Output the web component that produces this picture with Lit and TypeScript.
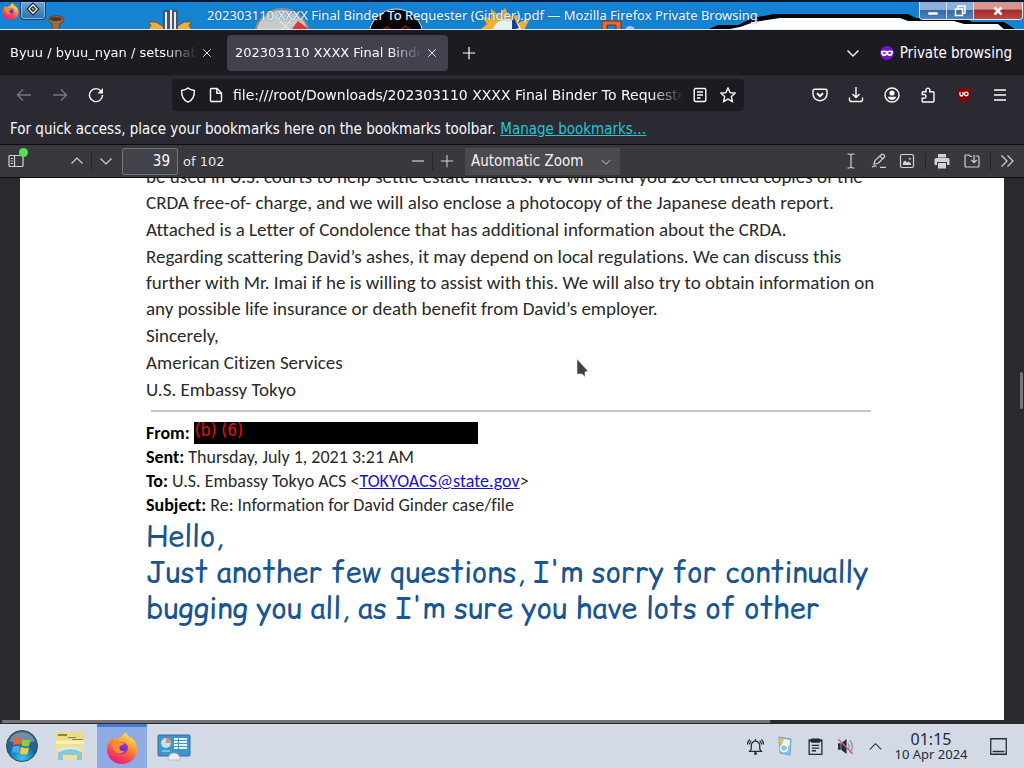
import { LitElement, html, css, svg, nothing } from "lit";
import { customElement } from "lit/decorators.js";

const icon = (body: unknown, size = 16, cls = "") =>
  html`<svg class="ico ${cls}" width=${size} height=${size} viewBox="0 0 16 16" aria-hidden="true">${body}</svg>`;

const I = {
  close: svg`<path d="M2 2l12 12m0-12L2 14" />`,
  plus: svg`<path d="M8 1v14M1 8h14" />`,
  minus: svg`<path d="M2 8h12" />`,
  down: svg`<path d="M2.500 5.500L8 11l5.500-5.500" />`,
  up: svg`<path d="M2.500 10.500L8 5l5.500 5.500" />`,
  back: svg`<path d="M15 8H1.500M7 2.500L1.500 8 7 13.500" />`,
  forward: svg`<path d="M1 8h13.500M9 2.500L14.500 8 9 13.500" />`,
  reload: svg`<path d="M13.200 4.200A6.500 6.500 0 1 0 14.500 8" /><path class="fill" d="M15 1v5.500H9.500z" />`,
  shield: svg`<path d="M8 1c2 1.600 4 2.200 6.400 2.500C14.600 9 12 13.500 8 15.200 4 13.500 1.400 9 1.600 3.500 4 3.200 6 2.600 8 1z" />`,
  page: svg`<path d="M3.500 1.500h5.500L13.500 6v7.500a1 1 0 0 1-1 1h-9a1 1 0 0 1-1-1v-11a1 1 0 0 1 1-1z" /><path d="M8.800 1.500V6.200h4.700" />`,
  reader: svg`<rect x="2.200" y="1.500" width="11.600" height="13" rx="1.500" /><path d="M5 5h6M5 8h6M5 11h3.500" />`,
  star: svg`<path d="M8 1l2.100 4.600 5 .6-3.700 3.400 1 5L8 12.100l-4.400 2.500 1-5L.900 6.200l5-.6z" />`,
  pocket: svg`<path d="M2.500 2.300h11a1.500 1.500 0 0 1 1.500 1.500V7A7 6.700 0 0 1 1 7V3.800a1.500 1.500 0 0 1 1.500-1.500z" /><path class="bold" d="M5 6.300L8 9.200l3-2.900" />`,
  download: svg`<path d="M8 0v10M4.500 7L8 10.500 11.500 7M1.500 10.500V13a1.500 1.500 0 0 0 1.500 1.500h10a1.500 1.500 0 0 0 1.500-1.500v-2.500" />`,
  account: svg`<circle cx="8" cy="8" r="7" /><circle class="fill" cx="8" cy="6" r="2.600" /><path class="fill" d="M3.800 9.800h8.400c-.6 2.300-2.500 3.200-4.200 3.200s-3.600-.9-4.200-3.200z" />`,
  puzzle: svg`<path d="M3.200 4.700H6V3a1.900 1.900 0 0 1 3.800 0v1.700H13a1 1 0 0 1 1 1V14a1 1 0 0 1-1 1H3.200a1 1 0 0 1-1-1v-2.700H4a1.900 1.900 0 0 0 0-3.800H2.200V5.700a1 1 0 0 1 1-1z" />`,
  menu: svg`<path d="M2 3h12M2 8h12M2 13h12" />`,
  sidebar: svg`<rect x="1" y="2.500" width="14" height="11" rx="1" /><path d="M6.500 2.500v11M2.800 5.500h2M2.800 8h2M2.800 10.500h2" />`,
  caret: svg`<path d="M4.500 1h2L8 2l1.500-1h2M8 2v12M4.500 15h2L8 14l1.500 1h2" />`,
  pen: svg`<path d="M3 11l1-3.500L10.500 1.500a1.400 1.400 0 0 1 2 0l.8.8a1.400 1.400 0 0 1 0 2L7 10.500zM9 3.200l2.600 2.600M1 14.300c1.500-1.800 3-1.800 4.500-.8M9 14.300h6" />`,
  image: svg`<rect x="1.500" y="1.500" width="13" height="13" rx="1.500" /><path class="fill" d="M4 12V9.500l2-2 2 2 1.500-1 2.500 2V12z" /><circle class="fill" cx="10.800" cy="5.800" r="1" />`,
  printer: svg`<path class="fill" d="M4 1h8v3.500H4zM2 5h12a1.500 1.500 0 0 1 1.500 1.500V12H13V9H3v3H.5V6.500A1.500 1.500 0 0 1 2 5z" /><path class="fill" d="M4 10h8v5.500H4z" />`,
  save: svg`<path d="M11.500 3H14a1 1 0 0 1 1 1v9a1 1 0 0 1-1 1H2a1 1 0 0 1-1-1V3a1 1 0 0 1 1-1h3l1.500 1.500H8M10 2v7.500M7.300 7l2.700 2.700L12.700 7" />`,
  chevrons: svg`<path d="M2.500 2.500L8 8l-5.500 5.500M8.500 2.500L14 8l-5.500 5.500" />`,
};

const firefoxLogo = (size: number) => html`<svg width=${size} height=${size} viewBox="0 0 32 32" aria-hidden="true">
  <defs>
    <linearGradient id="fx" x1=".8" y1="0" x2=".3" y2="1">
      <stop offset="0" stop-color="#fff44f" /><stop offset=".35" stop-color="#ffa436" />
      <stop offset=".65" stop-color="#ff5540" /><stop offset="1" stop-color="#e31587" />
    </linearGradient>
    <radialGradient id="fp" cx=".5" cy=".6" r=".6">
      <stop offset="0" stop-color="#5b36c9" /><stop offset="1" stop-color="#a132d6" />
    </radialGradient>
  </defs>
  <path fill="url(#fx)" d="M4 9c0-2 1-4 2-5 0 2 1 3 3 4 1-1 3-2 5-2 2-2 4-4 6-6 1 3 3 4 4 6l1-1c4 3 6 8 6 13 0 8-7 14-15 14S1 26 1 18c0-4 1-7 3-9z" />
  <circle cx="16" cy="16" r="6" fill="url(#fp)" />
  <path fill="#ff8a34" d="M5 12c3-3 7-3 9-2l5 1c-1 2-4 2-5 3-2 3 1 6 5 5-2 3-10 4-12-3-1-2-1-3-2-4z" />
</svg>`;

@customElement("window-title")
class WindowTitle extends LitElement {
  static styles = css`
    :host { display: flex; position: relative; height: 30px; box-sizing: border-box; background: #1583d2;
      border-top: 2px solid #07142f; border-bottom: 1px solid #dcebf8; font-family: "Noto Sans", sans-serif; overflow: hidden; }
    .art { position: absolute; inset: 0; width: 100%; height: 100%; }
    .logo { position: relative; padding: 0 1px 0 2px; margin-top: 1px; }
    .sys { position: relative; width: 26px; height: 18px; padding: 0; box-sizing: border-box; border: 1px solid #123f73;
      border-top: 0; border-radius: 0 0 4px 4px; box-shadow: inset 0 0 0 1px #8dbbe4; background: linear-gradient(#6fa3d3, #2c70ae); }
    .title { position: relative; flex: 1; margin: 0; text-align: center; font-size: 13px; line-height: 26px; font-weight: 400;
      color: #f2f8ff; white-space: nowrap; text-shadow: 0 0 2px #0b5fa8; }
    .ctl { position: relative; display: flex; height: 18px; margin-right: 1px; border: 1px solid #dfe8f2; border-top: 0;
      border-radius: 0 0 4px 4px; box-sizing: border-box; overflow: hidden; }
    .ctl button { width: 27px; padding: 0; border: 0; border-right: 1px solid #cfdcea; background: linear-gradient(#8cb0d8 45%, #3a6aa5 50%, #4a86c0);
      display: grid; place-items: center; }
    .ctl .x { width: 48px; border: 0; background: linear-gradient(#d69791 40%, #a52d28 50%, #b94a45); }
  `;
  render() {
    return html`
      <svg class="art" viewBox="0 2 1024 27" preserveAspectRatio="none" aria-hidden="true">
        <path d="M49 18q8-5 15 0 1 4-4 6l-1 6h-7v-6q-4-2-3-6z" fill="#9b6a45" stroke="#6a4029" /><ellipse cx="56" cy="19" rx="6" ry="2" fill="#553425" />
        <path d="M148 30l3-5-3-3h8l8 5v4zM192 30l-3-5 3-3h-8l-8 5v4z" fill="#e8b04a" stroke="#7b5518" />
        <path d="M163 10h15v20h-15z" fill="#4a5564" /><path d="M166 12v18M171 10v20M175 12v18" stroke="#e9edf2" stroke-width="2" />
        <circle cx="282" cy="36" r="27" fill="#c9cbc9" stroke="#8b8e92" stroke-width="2" /><path d="M291 30l7-9 12 9z" fill="#d63b34" /><path d="M270 12l20 18M298 12l-16 18" stroke="#ededec" />
        <circle cx="396" cy="36" r="27" fill="#0b0204" stroke="#d8dfe6" /><path d="M382 30l5-3 4 3M400 30l6-4 4 4" stroke="#6f1018" stroke-width="2" fill="none" />
        <path d="M480 30l7-6-5-7 9 1 0-9 8 6 6-7 4 8 10-1-1 8 13-6-7 13z" fill="#f4b02c" /><circle cx="507" cy="34" r="15" fill="#e4f3ee" /><path d="M512 14l7 14-7 2z" fill="#173f93" />
        <path d="M602 30v-9h19v9h-5v-5h-9v5z" fill="#e86b35" stroke="#73331d" /><circle cx="630" cy="31" r="5" fill="#a9c5ec" />
        <path d="M704 31l14-6h20l14-7 22-4h134l8 4h50l6 4h32l14 9z" fill="#05070c" /><path d="M720 31l20-4 14-5 26-4h120l8 3h46l10 3h34l8 7z" fill="#fff" />
      </svg>
      <span class="logo">${firefoxLogo(17)}</span>
      <button class="sys" aria-label="Window menu"><svg width="14" height="14" viewBox="0 0 12 12"><path d="M6 1l5 5-5 5-5-5z" fill="#fff" stroke="#222" /><path d="M6 4l2 2-2 2-2-2z" fill="#8bb" stroke="#222" /></svg></button>
      <h1 class="title">202303110 XXXX Final Binder To Requester (Ginder).pdf — Mozilla Firefox Private Browsing</h1>
      <div class="ctl">
        <button aria-label="Minimise"><svg width="14" height="12"><rect x="2" y="7" width="10" height="3" fill="#fff" stroke="#47607f" stroke-width=".5" /></svg></button>
        <button aria-label="Restore"><svg width="14" height="14" fill="none" stroke="#fff" stroke-width="1.500"><path d="M5 4V2h7v7h-2" /><rect x="2.500" y="5" width="7" height="6.500" /></svg></button>
        <button class="x" aria-label="Close"><svg width="14" height="14"><path d="M3.500 3.500l7 7m0-7l-7 7" stroke="#fff" stroke-width="2.500" /></svg></button>
      </div>`;
  }
}

@customElement("browser-chrome")
class BrowserChrome extends LitElement {
  static styles = css`
    :host { display: block; font-family: "DejaVu Sans Condensed", "DejaVu Sans", sans-serif; font-size: 15px; color: #fbfbfe; background: #2b2a33; }
    button { font: inherit; color: inherit; background: none; border: 0; padding: 0; display: inline-grid; place-items: center; }
    .ico { fill: none; stroke: currentColor; stroke-width: 1.4; display: block; }
    .ico .fill { fill: currentColor; stroke: none; }
    .ico .bold { stroke-width: 2; }
    .tabs { display: flex; align-items: center; gap: 4px; height: 45px; padding: 0 12px 0 2px; background: #1c1b22; box-sizing: border-box; }
    .tab { display: flex; align-items: center; width: 221px; height: 36px; border-radius: 4px; padding: 0 8px; box-sizing: border-box; gap: 2px; }
    .tab.on { background: #42414d; }
    .name { flex: 1; min-width: 0; overflow: hidden; white-space: nowrap; text-align: left; display: block; font: 13px/36px "DejaVu Sans", sans-serif;
      mask-image: linear-gradient(to left, transparent, #000 32px); }
    .tab .shut { width: 16px; height: 16px; }
    .new { width: 34px; height: 36px; }
    .all { margin-left: auto; width: 36px; height: 36px; }
    .private { display: flex; align-items: center; gap: 6px; margin-left: 5px; }
    .nav { display: flex; align-items: center; height: 39px; padding: 0 6px; border-top: 1px solid #26252d; box-sizing: border-box; }
    .nav > button { width: 36px; height: 36px; }
    .off { color: #77767e; }
    .url { flex: 1; min-width: 0; display: flex; align-items: center; gap: 12px; height: 32px; margin: 0 58px; padding: 0 8px; border-radius: 4px; background: #1c1b22; box-sizing: border-box; }
    .url input { flex: 1; min-width: 0; font: 14px "DejaVu Sans", sans-serif; color: inherit; background: none; border: 0; padding: 0; margin: 0 -3px; outline: 0;
      mask-image: linear-gradient(to left, transparent, #000 32px); }
    .marks { height: 30px; line-height: 30px; padding: 0 10px; box-sizing: border-box; white-space: nowrap; overflow: hidden; margin: 0; }
    .marks a { color: #29c4d2; }
    .pdf { display: grid; grid-template-columns: 1fr auto 1fr; align-items: center; height: 34px; background: #38383d; border-top: 1px solid #0c0c0d; border-bottom: 1px solid #0c0c0d; box-sizing: border-box; color: #d2d2d5; }
    .pdf .ico { stroke-width: 1.2; }
    .grp { display: flex; align-items: center; }
    .grp button { width: 28px; height: 28px; flex: none; }
    .sep { width: 1px; height: 17px; background: #252529; flex: none; }
    .left { padding-left: 2px; }
    .side { position: relative; margin-right: 33px; }
    .dot { position: absolute; right: 2px; top: 1px; width: 9px; height: 9px; border-radius: 50%; background: #54e04e; }
    .num { width: 56px; height: 27px; margin: 0 5px 0 2px; box-sizing: border-box; background: #42424a; border: 1px solid #75757c; border-radius: 2px; color: #fbfbfe; font: inherit; text-align: right; padding: 0 7px; }
    .of { font: 13px "DejaVu Sans", sans-serif; color: #e9e9ec; }
    .zoom { position: relative; margin-left: 4px; display: block; }
    .zoom select { appearance: none; width: 155px; height: 27px; border: 0; background: #4a4a4f; color: #f2f2f4; font: inherit; padding: 0 6px; display: block; }
    .zoom .ico { position: absolute; right: 8px; top: 8px; pointer-events: none; }
    .right { justify-content: flex-end; padding-right: 3px; }
    .right .sep { margin: 0 2px 0 4px; }
    .right .print { margin-right: 2px; }
  `;
  private btn(label: string, body: unknown, cls = "", size = 16) {
    return html`<button class=${cls || nothing} aria-label=${label}>${icon(body, size)}</button>`;
  }
  private tab(title: string, on: boolean) {
    return html`<div class="tab ${on ? "on" : ""}"><button class="name">${title}</button>${this.btn("Close tab", I.close, "shut", 10)}</div>`;
  }
  render() {
    return html`
      <div class="tabs">
        ${this.tab("Byuu / byuu_nyan / setsunabyuu", false)}
        ${this.tab("202303110 XXXX Final Binder To", true)}
        ${this.btn("New tab", I.plus, "new", 14)}
        ${this.btn("List all tabs", I.down, "all")}
        <span class="private"><svg width="14" height="14" viewBox="0 0 14 14"><circle cx="7" cy="7" r="7" fill="#7a12c9" /><path d="M1 5q3-1 6 0 3-1 6 0 0 5-3 5-2 0-3-1.500Q6 10 4 10 1 10 1 5z" fill="#fff" /><ellipse cx="4.300" cy="7" rx="1.500" ry="1" fill="#7a12c9" /><ellipse cx="9.700" cy="7" rx="1.500" ry="1" fill="#7a12c9" /></svg>Private browsing</span>
      </div>
      <div class="nav">
        ${this.btn("Back", I.back, "off")}${this.btn("Forward", I.forward, "off")}${this.btn("Reload", I.reload)}
        <div class="url">
          ${icon(I.shield)}${icon(I.page)}
          <input aria-label="Address" value="file:///root/Downloads/202303110 XXXX Final Binder To Requester (Ginder).pdf" />
          ${icon(I.reader)}${icon(I.star)}
        </div>
        ${this.btn("Pocket", I.pocket)}${this.btn("Downloads", I.download)}${this.btn("Account", I.account)}${this.btn("Extensions", I.puzzle)}
        <button aria-label="uBlock Origin"><svg width="16" height="16" viewBox="0 0 16 16"><path d="M8 0c2 1.500 4 2 7 2 0 7-1 11-7 14C2 13 1 9 1 2c3 0 5-.500 7-2z" fill="#8c0000" /><path d="M4 5v2.500a1.500 1.500 0 0 0 3 0V5" fill="none" stroke="#fff" stroke-width="1.300" /><circle cx="10.300" cy="7" r="1.800" fill="none" stroke="#fff" stroke-width="1.300" /></svg></button>
        ${this.btn("Menu", I.menu)}
      </div>
      <p class="marks">For quick access, place your bookmarks here on the bookmarks toolbar. <a href="#">Manage bookmarks…</a></p>
      <div class="pdf">
        <div class="grp left">
          <button class="side" aria-label="Toggle sidebar">${icon(I.sidebar)}<span class="dot"></span></button>
          ${this.btn("Previous page", I.up)}<span class="sep"></span>${this.btn("Next page", I.down)}
          <input class="num" aria-label="Page" value="39" /><span class="of">of 102</span>
        </div>
        <div class="grp">
          ${this.btn("Zoom out", I.minus)}<span class="sep"></span>${this.btn("Zoom in", I.plus, "", 14)}
          <label class="zoom"><select aria-label="Zoom"><option>Automatic Zoom</option></select>${icon(I.down, 12)}</label>
        </div>
        <div class="grp right">
          ${this.btn("Text", I.caret)}${this.btn("Draw", I.pen)}${this.btn("Add image", I.image)}<span class="sep"></span>
          ${this.btn("Print", I.printer, "print")}${this.btn("Save", I.save)}<span class="sep"></span>${this.btn("Tools", I.chevrons)}
        </div>
      </div>`;
  }
}

@customElement("pdf-page")
class PdfPage extends LitElement {
  static styles = css`
    :host { display: flex; flex-direction: column; position: relative; min-height: 0; background: #2a2a2e; overflow: hidden; }
    .sheet { flex: 1; min-height: 0; margin: 0 20px; padding: 0 126px; background: #fff; color: #2a2a2a; overflow: hidden; white-space: nowrap; }
    p { margin: 0 0 1px; font: 19px/26px Carlito, Lato, sans-serif; font-variant-ligatures: none; }
    .body { margin-top: -14px; }
    hr { border: 0; height: 2px; background: #c6c6c6; margin: 7px 7px 9px 5px; }
    .head { font: 18px/24px Carlito, Lato, sans-serif; font-variant-ligatures: none; margin: 0; display: flex; align-items: center; gap: 4px; }
    .head b { font-weight: 700; color: #000; }
    .head a { color: #1a10d0; }
    .redact { width: 284px; height: 22px; background: #000; color: #f00d12; font: 17px/16px "DejaVu Sans Condensed", sans-serif; box-sizing: border-box; padding-left: 1px; overflow: hidden; }
    .note { margin: 1px 0 0; font: 400 29px/36px "Comic Relief", "Comic Neue", "Noto Sans", sans-serif; color: #185592; }
    .pointer { position: absolute; left: 576px; top: 180px; }
    .vbar { position: absolute; right: 1px; top: 194px; width: 3px; height: 37px; background: #77777b; border-radius: 2px; }
    .hbar { height: 3px; width: 75%; margin: 0 0 1px 2px; background: #747477; }
  `;
  render() {
    return html`
      <div class="sheet">
        <div class="body">
          <p>be used in U.S. courts to help settle estate mattes. We will send you 20 certified copies of the<br />CRDA free-of- charge, and we will also enclose a photocopy of the Japanese death report.</p>
          <p>Attached is a Letter of Condolence that has additional information about the CRDA.</p>
          <p>Regarding scattering David’s ashes, it may depend on local regulations. We can discuss this<br />further with Mr. Imai if he is willing to assist with this. We will also try to obtain information on<br />any possible life insurance or death benefit from David’s employer.</p>
          <p>Sincerely,</p><p>American Citizen Services</p><p>U.S. Embassy Tokyo</p>
        </div>
        <hr />
        <div class="head"><b>From:</b><span class="redact">(b) (6)</span></div>
        <div class="head"><b>Sent:</b><span>Thursday, July 1, 2021 3:21 AM</span></div>
        <div class="head"><b>To:</b><span>U.S. Embassy Tokyo ACS &lt;<a href="mailto:TOKYOACS@state.gov">TOKYOACS@state.gov</a>&gt;</span></div>
        <div class="head"><b>Subject:</b><span>Re: Information for David Ginder case/file</span></div>
        <div class="note">Hello,<br />Just another few questions, I'm sorry for continually<br />bugging you all, as I'm sure you have lots of other</div>
      </div>
      <div class="hbar"></div><div class="vbar"></div>
      <svg class="pointer" width="14" height="22" viewBox="0 0 14 22"><path d="M1 1l11 12-3 1 0 5-3-3H1z" fill="#404040" stroke="#e8e8e8" stroke-width=".6" /></svg>`;
  }
}

@customElement("task-bar")
class TaskBar extends LitElement {
  static styles = css`
    :host { display: flex; align-items: center; gap: 2px; height: 44px; padding-right: 1px; background: #d3dae6; font-family: "Noto Sans", sans-serif; color: #232b3a; }
    button { border: 0; padding: 0; background: none; height: 44px; display: grid; place-items: center; color: inherit; }
    .app { width: 50px; box-sizing: border-box; }
    .start { width: 43px; }
    .on { background: #8fabe6; border-top: 3px solid #4a78cf; }
    .gap { flex: 1; }
    .tray { width: 28px; }
    .ico { fill: none; stroke: currentColor; stroke-width: 1.2; }
    .ico .fill { fill: currentColor; stroke: none; }
    .ico .slash { stroke: #d4606a; }
    .clock { width: 80px; text-align: center; line-height: 14px; font-size: 13px; white-space: nowrap; }
    .time { font-size: 16px; line-height: 16px; display: block; }
    .desk { width: 50px; }
  `;
  render() {
    return html`
      <button class="start" aria-label="Start"><svg width="34" height="34" viewBox="0 0 34 34">
        <defs><radialGradient id="orb" cx=".5" cy=".9" r=".9"><stop offset="0" stop-color="#35c8f5" /><stop offset=".5" stop-color="#1a649c" /><stop offset="1" stop-color="#48646e" /></radialGradient></defs>
        <circle cx="17" cy="17" r="15.500" fill="url(#orb)" stroke="#2c4d5e" /><path d="M4 12a14 14 0 0 1 26 0q-13 6-26 0z" fill="#fff" opacity=".28" />
        <path d="M9 10q4-2 7-.500l-1 6.500q-4-1.500-7 .500z" fill="#f0642a" /><path d="M17.500 10q4 2 8 .500l-1.500 6.500q-4 1-7.500-.500z" fill="#93cb3e" /><path d="M7.500 18q4-2 7.500-.500l-1 6.500q-4-1.500-7.500.500z" fill="#4aa8ee" /><path d="M16 18q4 2 8 .500l-1.500 6.500q-4 1-7.500-.500z" fill="#fccb3a" />
      </svg></button>
      <button class="app" aria-label="Files"><svg width="30" height="30" viewBox="0 0 30 30"><path d="M1 1h28v27H1z" fill="#f2df92" /><path d="M1 1h28v7H1z" fill="#f0da86" /><path d="M3 3h9v2H3zM13 6h8v1h-8zM17 8h11v1H17z" fill="#7c8a52" /><path d="M1 10h28v3H1z" fill="#faefb8" /><path d="M3 20q12-6 24 0v9h-5v-5H8v5H3z" fill="#89c8dc" /><path d="M3 20q12-6 24 0" fill="none" stroke="#d9eff0" stroke-width="2" /></svg></button>
      <button class="app on" aria-label="Firefox">${firefoxLogo(32)}</button>
      <button class="app" aria-label="Control panel"><svg width="34" height="30" viewBox="0 0 34 30"><rect x="1" y="4" width="32" height="21" rx="1" fill="#3e95cc" stroke="#2a6fa0" /><circle cx="9" cy="12" r="5" fill="#bfe3f7" /><path d="M9 12V7a5 5 0 0 1 5 5z" fill="#f09050" /><path d="M17 8h4M22 8h8M17 11h4M22 11h8M17 14h4M22 14h8M17 17h4M22 17h8" stroke="#e8f6fd" stroke-width="2" /><path d="M5 20h8" stroke="#bfe3f7" /><path d="M11 29q0-7 6-7t6 7z" fill="#e9edf0" stroke="#99a" stroke-width=".5" /></svg></button>
      <span class="gap"></span>
      <button class="tray" aria-label="Notifications">${icon(svg`<path d="M2.500 12.500h11L12 10.500V7A4 4 0 0 0 4 7v3.500zM8 3V1M2.500 1.500Q.5 3 .5 6M4 2.500Q2.500 4 2.300 6M13.500 1.500q2 1.500 2 4.500M12 2.500q1.500 1.500 1.700 3.500" /><circle class="fill" cx="8" cy="14.500" r="1.400" />`, 17)}</button>
      <button class="tray" aria-label="Clipboard manager"><svg width="16" height="20" viewBox="0 0 16 20"><path d="M2 1l12 2-1 16-10-2z" fill="#8cc4e4" stroke="#6ca5c8" /><path d="M6 3l7 1-.500 6-7-1z" fill="#f8f4df" /><circle cx="7" cy="12" r="3.500" fill="none" stroke="#fff" stroke-width="1.500" /><path d="M2 2l5 1-3 7z" fill="#e8c15a" /></svg></button>
      <button class="tray" aria-label="Notes">${icon(svg`<path d="M2 2h12v13.500H2zM4.500 7h7M4.500 9.500h7M4.500 12h4" /><path class="fill" d="M4 .500h8V4.500H4zM2 1.500h12v2H2z" />`, 17)}</button>
      <button class="tray" aria-label="Volume muted">${icon(svg`<path class="fill" d="M1 5h2.500v6H1zM4 5l5-4v14l-5-4z" /><path d="M10.500 5q2 3 0 6M12 2q5 6 0 12" opacity=".4" /><path class="slash" d="M1 1l14 14" />`, 17)}</button>
      <button class="tray" aria-label="Show hidden icons">${icon(svg`<path d="M2 11l6-6 6 6" />`, 15)}</button>
      <div class="clock"><span class="time">01:15</span>10 Apr 2024</div>
      <button class="desk" aria-label="Show desktop">${icon(svg`<path d="M.7.7h14.600v14.600H.7zM2.500 12.700h11" />`, 17)}</button>`;
  }
}

@customElement("app-root")
class AppRoot extends LitElement {
  static styles = css`
    :host { display: grid; grid-template-rows: auto auto 1fr auto; height: 100vh; overflow: hidden; }
  `;
  render() {
    return html`<window-title></window-title><browser-chrome></browser-chrome><pdf-page></pdf-page><task-bar></task-bar>`;
  }
}
